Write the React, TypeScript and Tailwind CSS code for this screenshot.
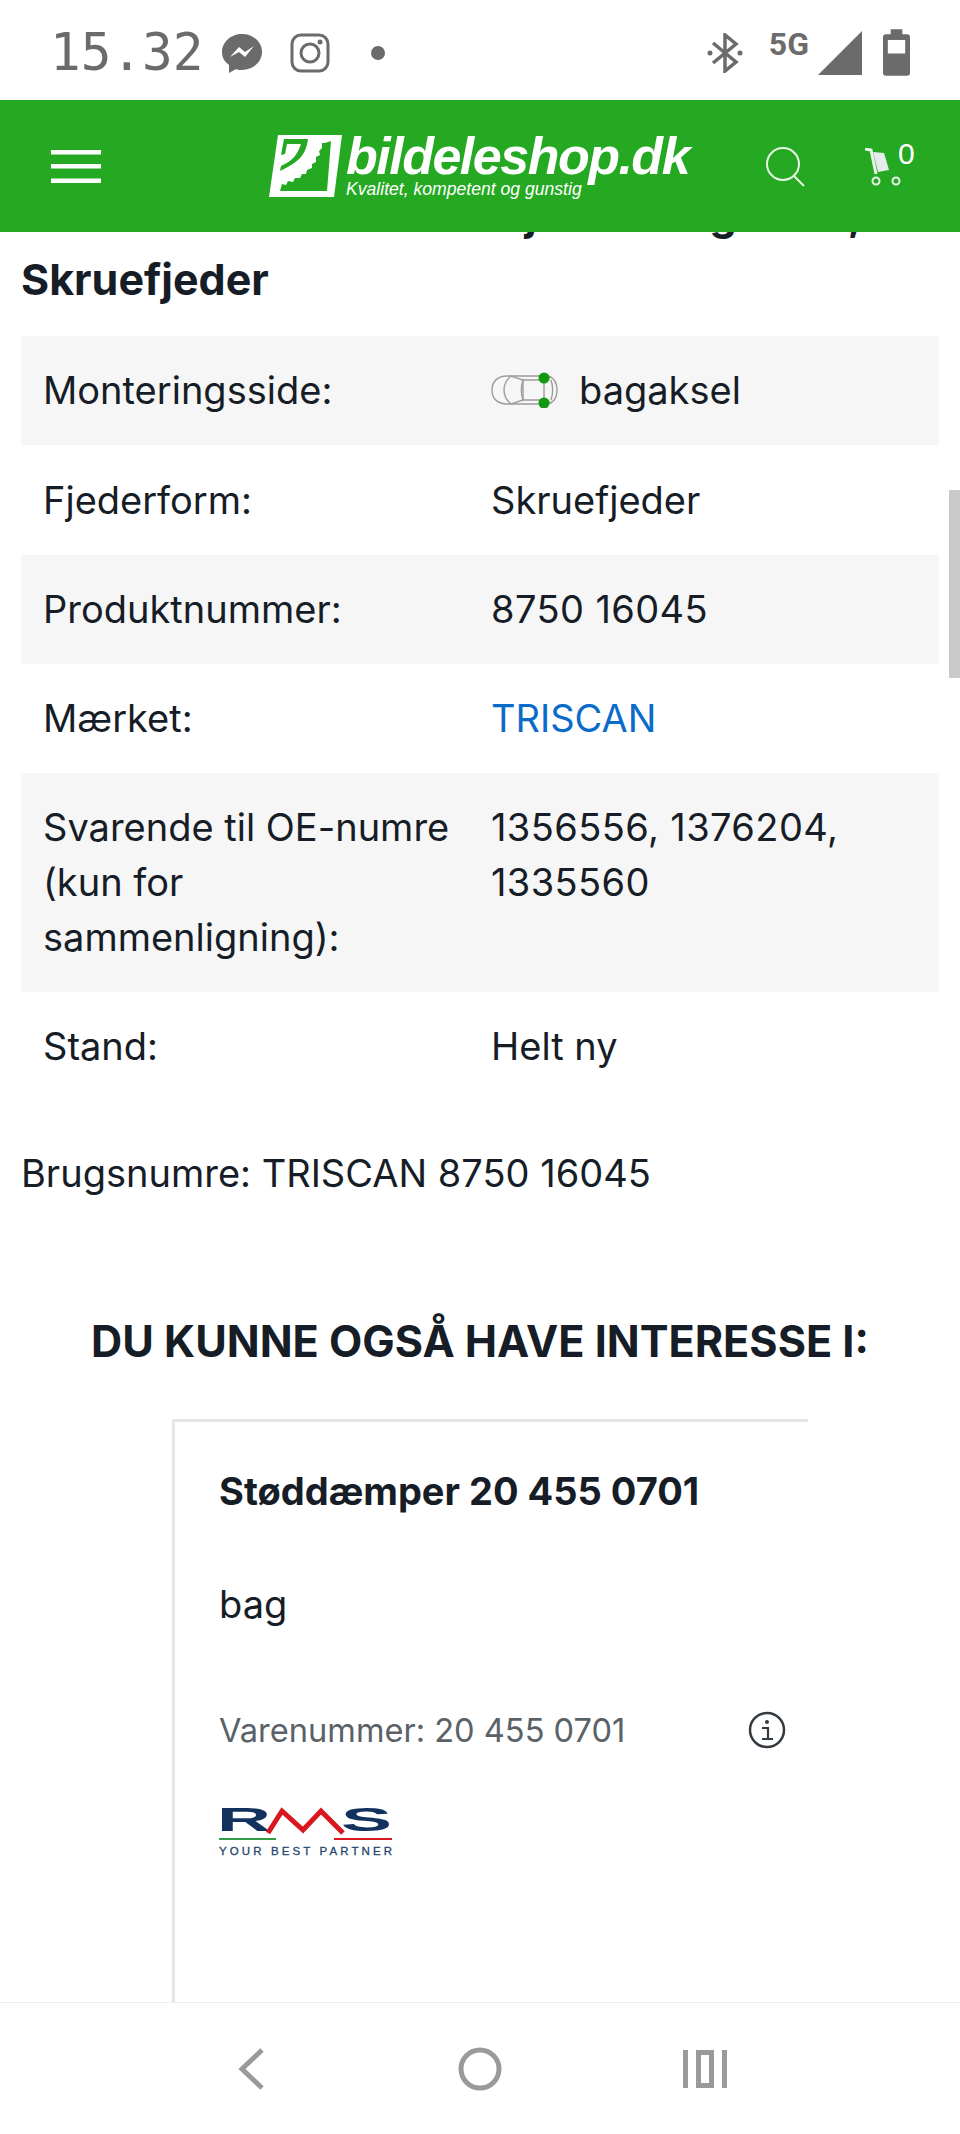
const ROWS = [
  { label: "Monteringsside:", value: "bagaksel", icon: true, shaded: true },
  { label: "Fjederform:", value: "Skruefjeder" },
  { label: "Produktnummer:", value: "8750 16045", shaded: true, digits: true },
  { label: "Mærket:", value: "TRISCAN", link: true },
  { label: "Svarende til OE-numre (kun for sammenligning):", value: "1356556, 1376204, 1335560", shaded: true, digits: true },
  { label: "Stand:", value: "Helt ny" },
];

function CarIcon() {
  return (
    <svg width="68" height="36" viewBox="0 0 68 36" fill="none" stroke="#9c9c9c" strokeWidth="1.4" className="shrink-0">
      <path d="M1 18C1 9 7 4 16 4H55C62 4 66 10 66 18C66 26 62 32 55 32H16C7 32 1 27 1 18Z" />
      <path d="M20 4C14 9 13 13 13 18C13 23 14 27 20 32L32 28V8Z" />
      <path d="M32 8H53V28H32C30 22 30 14 32 8Z" />
      <path d="M53 8L60 5M53 28L60 31M60 8C62 14 62 22 60 28" />
      <circle cx="53" cy="6" r="5.5" fill="#0f9a0f" stroke="none" />
      <circle cx="53" cy="31" r="5.5" fill="#0f9a0f" stroke="none" />
    </svg>
  );
}

function LogoMark() {
  return (
    <svg width="90" height="75" viewBox="0 0 90 75" className="shrink-0">
      <path d="M16 6H80L72 68H7Z" fill="#fff" />
      <path d="M22 10H46C45 18 42 26 36 31C30 36 24 39 18 42L19 37C25 34 30 31 33 27C36 23 38 18 39 15H25L23 25L19 26Z" fill="#25a922" />
      <path d="M69 12L65 62H18L20 55L24 56L26 52L31 53L33 49L38 49L40 45L44 45L45 41L50 39L50 35L54 33L54 28L58 26L57 22L60 19L60 14L63 14Z" fill="#25a922" />
    </svg>
  );
}

function RmsLogo() {
  return (
    <svg width="174" height="50" viewBox="0 0 174 50" className="block">
      <text x="-2" y="24" fontFamily="Liberation Sans" fontWeight="700" fontSize="33" fill="#12315f" textLength="54" lengthAdjust="spacingAndGlyphs">R</text>
      <path d="M49 26L63 4L84 23L102 4L124 26" fill="none" stroke="#d8171f" strokeWidth="5" />
      <text x="122" y="24" fontFamily="Liberation Sans" fontWeight="700" fontSize="33" fill="#12315f" textLength="51" lengthAdjust="spacingAndGlyphs">S</text>
      <rect x="0" y="31" width="57" height="2" fill="#2f9e44" />
      <rect x="115" y="31" width="58" height="2" fill="#d8171f" />
      <text x="0" y="48" fontFamily="Liberation Sans" fontSize="11.5" fill="#24456f" stroke="#24456f" strokeWidth="0.3" textLength="173" lengthAdjust="spacing">YOUR BEST PARTNER</text>
    </svg>
  );
}

function StatusBar() {
  return (
    <div className="relative z-20 h-[100px] bg-white flex items-center pl-[50px] pr-[50px] pt-[5px] text-[#6b6b6b]">
      <span className="font-['DejaVu_Sans_Mono',monospace] text-[51px] leading-none">15.32</span>
      <svg width="42" height="42" viewBox="0 0 42 42" className="ml-[17px]">
        <path d="M21 2C10 2 1 10 1 20C1 26 4 30 8 33V41L15 37C17 38 19 38 21 38C32 38 41 30 41 20C41 10 32 2 21 2Z" fill="#6b6b6b" />
        <path d="M9 25L18 15L24 20L33 14L24 25L18 20Z" fill="#fff" />
      </svg>
      <svg width="40" height="40" viewBox="0 0 40 40" fill="none" stroke="#6b6b6b" strokeWidth="3" className="ml-[27px]">
        <rect x="2" y="2" width="36" height="36" rx="9" />
        <circle cx="20" cy="20" r="9" />
        <circle cx="30" cy="9" r="2.5" fill="#6b6b6b" stroke="none" />
      </svg>
      <span className="ml-[41px] w-[14px] h-[14px] rounded-full bg-[#6b6b6b]" />
      <div className="ml-auto flex items-center">
        <svg width="36" height="40" viewBox="0 0 36 40" fill="none" stroke="#6b6b6b" strokeWidth="3.5">
          <path d="M6 10L29 29L18 38V2L29 11L6 30" />
          <circle cx="3" cy="20" r="2.5" fill="#6b6b6b" stroke="none" />
          <circle cx="33" cy="20" r="2.5" fill="#6b6b6b" stroke="none" />
        </svg>
        <span className="ml-[26px] -mt-[18px] font-['Roboto',sans-serif] font-bold text-[32px] leading-none">5G</span>
        <svg width="44" height="44" viewBox="0 0 44 44" className="ml-[9px]">
          <path d="M0 44L44 0V44Z" fill="#6b6b6b" />
        </svg>
        <svg width="27" height="47" viewBox="0 0 28 48" className="ml-[21px]">
          <path d="M8 0H20V5H25C27 5 28 6 28 8V45C28 47 27 48 25 48H3C1 48 0 47 0 45V8C0 6 1 5 3 5H8Z" fill="#6b6b6b" />
          <rect x="5" y="11" width="18" height="14" fill="#fff" />
        </svg>
      </div>
    </div>
  );
}

function Header() {
  return (
    <header className="relative z-20 h-[132px] bg-[#25a922] flex items-center text-white">
      <svg width="50" height="33" viewBox="0 0 50 33" fill="#fff" className="ml-[51px]">
        <rect y="0" width="50" height="4.5" />
        <rect y="14" width="50" height="4.5" />
        <rect y="28.5" width="50" height="4.5" />
      </svg>
      <div className="ml-[161px] flex items-center">
        <LogoMark />
        <div className="-ml-[6px] italic font-['Liberation_Sans',sans-serif]">
          <div className="text-[52px] leading-[42px] font-bold tracking-[-1.5px]">bildeleshop.dk</div>
          <div className="mt-[3px] text-[17.6px] leading-[18px]">Kvalitet, kompetent og gunstig</div>
        </div>
      </div>
      <svg width="42" height="42" viewBox="0 0 42 42" fill="none" stroke="#e8f5e8" strokeWidth="2" className="ml-[76px] mt-[2px]">
        <circle cx="18" cy="18" r="16" />
        <path d="M29 30L39 40" />
      </svg>
      <div className="ml-[58px] relative w-[50px] h-[50px]">
        <svg width="40" height="38" viewBox="0 0 40 38" fill="none" stroke="#e8f5e8" strokeWidth="2" className="absolute left-0 top-[7px]">
          <path d="M0 1L6 2L11 26" strokeWidth="3" />
          <path d="M8 4L19 5L24 22L13 24Z" fill="#e6ecec" stroke="none" />
          <circle cx="11" cy="33" r="3.5" />
          <circle cx="31" cy="33" r="3.5" />
        </svg>
        <span className="absolute left-[33px] top-[-2px] text-[30px] leading-none font-['Liberation_Sans',sans-serif]">0</span>
      </div>
    </header>
  );
}

function NavBar() {
  return (
    <nav className="fixed left-0 right-0 bottom-0 z-20 h-[132px] bg-white border-t border-[#ececec] flex items-center justify-center pl-[4px] text-[#9a9a9a]">
      <svg width="30" height="44" viewBox="0 0 30 44" fill="none" stroke="#9a9a9a" strokeWidth="5">
        <path d="M25 3L5 22L25 41" />
      </svg>
      <svg width="44" height="44" viewBox="0 0 44 44" fill="none" stroke="#9a9a9a" strokeWidth="5" className="ml-[191px]">
        <circle cx="22" cy="22" r="19" />
      </svg>
      <svg width="44" height="38" viewBox="0 0 44 38" fill="#9a9a9a" className="ml-[181px]">
        <rect x="0" y="0" width="5" height="38" />
        <path fillRule="evenodd" d="M13 0H31V38H13ZM18 5V33H26V5Z" />
        <rect x="39" y="0" width="5" height="38" />
      </svg>
    </nav>
  );
}

export default function App() {
  return (
    <div className="relative w-[960px] h-[2134px] overflow-hidden bg-white text-[#161d26] font-['Inter',sans-serif]">
      <StatusBar />
      <Header />

      <main className="px-[21px] -mt-[50px]">
        <h1 className="font-bold text-[43px] leading-[65px]">TRISCAN 8750 16045: Fjeder: bagaksel, Skruefjeder</h1>

        <div className="mt-[24px] text-[38px] leading-[54.6px]">
          {ROWS.map((row) => (
            <div key={row.label} className={`grid grid-cols-[448px_1fr] px-[22px] py-[27.35px] ${row.shaded ? "bg-[#f6f6f6]" : ""}`}>
              <div className="pr-[30px]">{row.label}</div>
              <div className={`flex items-start ${row.link ? "text-[#0b6bcb]" : ""}`}>
                {row.icon && <span className="mr-[20px] mt-[9px]"><CarIcon /></span>}
                <span className={row.digits ? "tracking-[0.4px]" : ""}>{row.value}</span>
              </div>
            </div>
          ))}
        </div>

        <p className="mt-[45px] text-[38px] leading-[54.6px]">Brugsnumre: TRISCAN 8750 16045</p>

        <h2 className="mt-[111px] text-center font-bold text-[43.2px] leading-[60px] text-[#161d26]">DU KUNNE OGSÅ HAVE INTERESSE I:</h2>

        <div className="mt-[48px] ml-[151px] w-[636px] border-l-[3px] border-t-[3px] border-[#e6e6e6] pl-[44px] pt-[42px] pb-[200px] pr-[22px]">
          <div className="font-bold text-[38px] leading-[54px]">Støddæmper 20 455 0701</div>
          <div className="mt-[59px] text-[38px] leading-[54px]">bag</div>
          <div className="mt-[77px] flex items-center justify-between text-[32.6px] leading-[44px] text-[#5a6268]">
            <span>Varenummer: 20 455 0701</span>
            <svg width="38" height="38" viewBox="0 0 38 38" fill="none" stroke="#333a40" strokeWidth="2.5">
              <circle cx="19" cy="19" r="17" />
              <path d="M14 17H20V28M14 28H25" strokeWidth="2.2" />
              <circle cx="19" cy="11" r="2" fill="#333a40" stroke="none" />
            </svg>
          </div>
          <div className="mt-[55px]"><RmsLogo /></div>
        </div>
      </main>

      {/* scrollbar thumb */}
      <div className="absolute right-0 top-[490px] w-[11px] h-[188px] bg-[#c9c9c9]" />
      <NavBar />
    </div>
  );
}
